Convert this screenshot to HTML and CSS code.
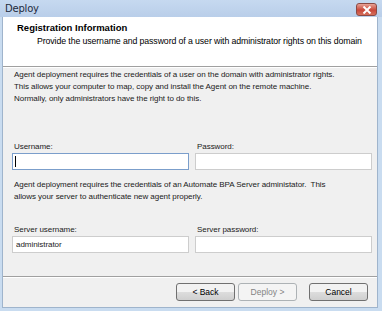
FILE: index.html
```html
<!DOCTYPE html>
<html lang="en">
<head>
    <meta charset="UTF-8">
    <title>Deploy</title>
    <link rel="stylesheet" href="styles.css">
</head>
<body>
    <div class="window">
        <div class="titlebar">
            <span class="title">Deploy</span>
            <span class="close-button">
                <svg width="10" height="8" viewBox="0 0 10 8"><path d="M1.5 0.5 L8.5 7.5 M8.5 0.5 L1.5 7.5" stroke="#fff" stroke-width="2"/></svg>
            </span>
        </div>
        <div class="frame">
            <div class="header">
                <h1>Registration Information</h1>
                <p>Provide the username and password of a user with administrator rights on this domain</p>
            </div>
            <div class="content">
                <p class="info">Agent deployment requires the credentials of a user on the domain with administrator rights.<br>This allows your computer to map, copy and install the Agent on the remote machine.<br>Normally, only administrators have the right to do this.</p>

                <div class="field-row first">
                    <div class="field">
                        <label for="username">Username:</label>
                        <div class="input-wrap">
                            <input type="text" id="username" class="focused">
                            <span class="caret"></span>
                        </div>
                    </div>
                    <div class="field">
                        <label for="password">Password:</label>
                        <input type="password" id="password">
                    </div>
                </div>

                <p class="info second">Agent deployment requires the credentials of an Automate BPA Server administator.&nbsp; This<br>allows your server to authenticate new agent properly.</p>

                <div class="field-row last">
                    <div class="field">
                        <label for="server-username">Server username:</label>
                        <input type="text" id="server-username" value="administrator">
                    </div>
                    <div class="field">
                        <label for="server-password">Server password:</label>
                        <input type="password" id="server-password">
                    </div>
                </div>
            </div>
            <div class="footer">
                <button type="button">&lt; Back</button>
                <button type="button" disabled>Deploy &gt;</button>
                <button type="button" class="cancel">Cancel</button>
            </div>
        </div>
    </div>
</body>
</html>
```

FILE: styles.css
```css
body {
    margin: 0;
    font-family: "Liberation Sans", Arial, sans-serif;
    font-size: 8px;
    letter-spacing: -0.05px;
    color: #000;
}

.window {
    width: 382px;
    height: 311px;
    background: #c9dcf0;
    display: flex;
    flex-direction: column;
    overflow: hidden;
}

.titlebar {
    height: 17px;
    flex-shrink: 0;
    display: flex;
    align-items: center;
    justify-content: space-between;
    background: linear-gradient(#c6d9f0, #b9cee9);
    padding: 0 5px;
}

.title {
    font-family: "DejaVu Sans", sans-serif;
    font-size: 10px;
    letter-spacing: -0.2px;
    color: #1e2b3c;
}

.close-button {
    width: 21px;
    height: 13px;
    margin-top: 2px;
    border: 1px solid #8b4a44;
    border-radius: 3px;
    background: linear-gradient(#e8a397, #c8473a 55%, #d7705c);
    display: flex;
    align-items: center;
    justify-content: center;
    box-sizing: border-box;
}

.frame {
    flex: 1;
    margin: 0 4px 3px 2px;
    border: 1px solid #9fb4cc;
    border-top: none;
    display: flex;
    flex-direction: column;
    background: #f0f0f0;
}

.header {
    background: #fff;
    height: 50px;
    flex-shrink: 0;
    padding: 5px 0 0 14px;
    box-sizing: border-box;
    border-bottom: 1px solid #a0a0a0;
    line-height: 12px;
    white-space: nowrap;
}

h1 {
    margin: 0;
    font-size: 9.5px;
    font-weight: bold;
    letter-spacing: 0;
}

.header p {
    margin: 1px 0 0 20px;
    font-size: 8.75px;
    letter-spacing: -0.1px;
}

.content {
    flex: 1;
    padding: 1px 5px 0 9px;
    border-top: 1px solid #fff;
    white-space: nowrap;
}

.info {
    margin: 0 0 0 2px;
    line-height: 12px;
    color: #1a1a1a;
}

.info.second {
    margin-top: 9px;
}

.field-row {
    display: flex;
    gap: 6px;
}

.field-row.first {
    margin-top: 36px;
}

.field-row.last {
    margin-top: 21px;
}

.field {
    flex: 1;
    display: flex;
    flex-direction: column;
}

label {
    line-height: 12px;
    padding-left: 2px;
    color: #1a1a1a;
}

.input-wrap {
    position: relative;
    display: flex;
    flex-direction: column;
}

.caret {
    position: absolute;
    left: 3px;
    top: 3px;
    width: 1px;
    height: 11px;
    background: #000;
}

input {
    height: 17px;
    box-sizing: border-box;
    border: 1px solid #cdcdcd;
    background: #fff;
    font-family: inherit;
    font-size: 8px;
    letter-spacing: -0.05px;
    padding: 0 3px;
    outline: none;
    color: #1a1a1a;
}

input.focused {
    border-color: #7b9ecb;
}

.footer {
    height: 30px;
    flex-shrink: 0;
    border-top: 1px solid #a0a0a0;
    box-shadow: inset 0 1px 0 #fff;
    display: flex;
    align-items: center;
    justify-content: flex-end;
    gap: 3px;
    padding: 0 9px 0 0;
}

button {
    width: 59px;
    height: 18px;
    padding: 0;
    font-family: inherit;
    font-size: 8.5px;
    border: 1px solid #707070;
    border-radius: 3px;
    background: linear-gradient(#f2f2f2 50%, #dddddd 50%, #cfcfcf);
    color: #000;
}

button:disabled {
    border-color: #adb2b5;
    background: #f4f4f4;
    color: #838383;
}

button.cancel {
    margin-left: 9px;
}
```
